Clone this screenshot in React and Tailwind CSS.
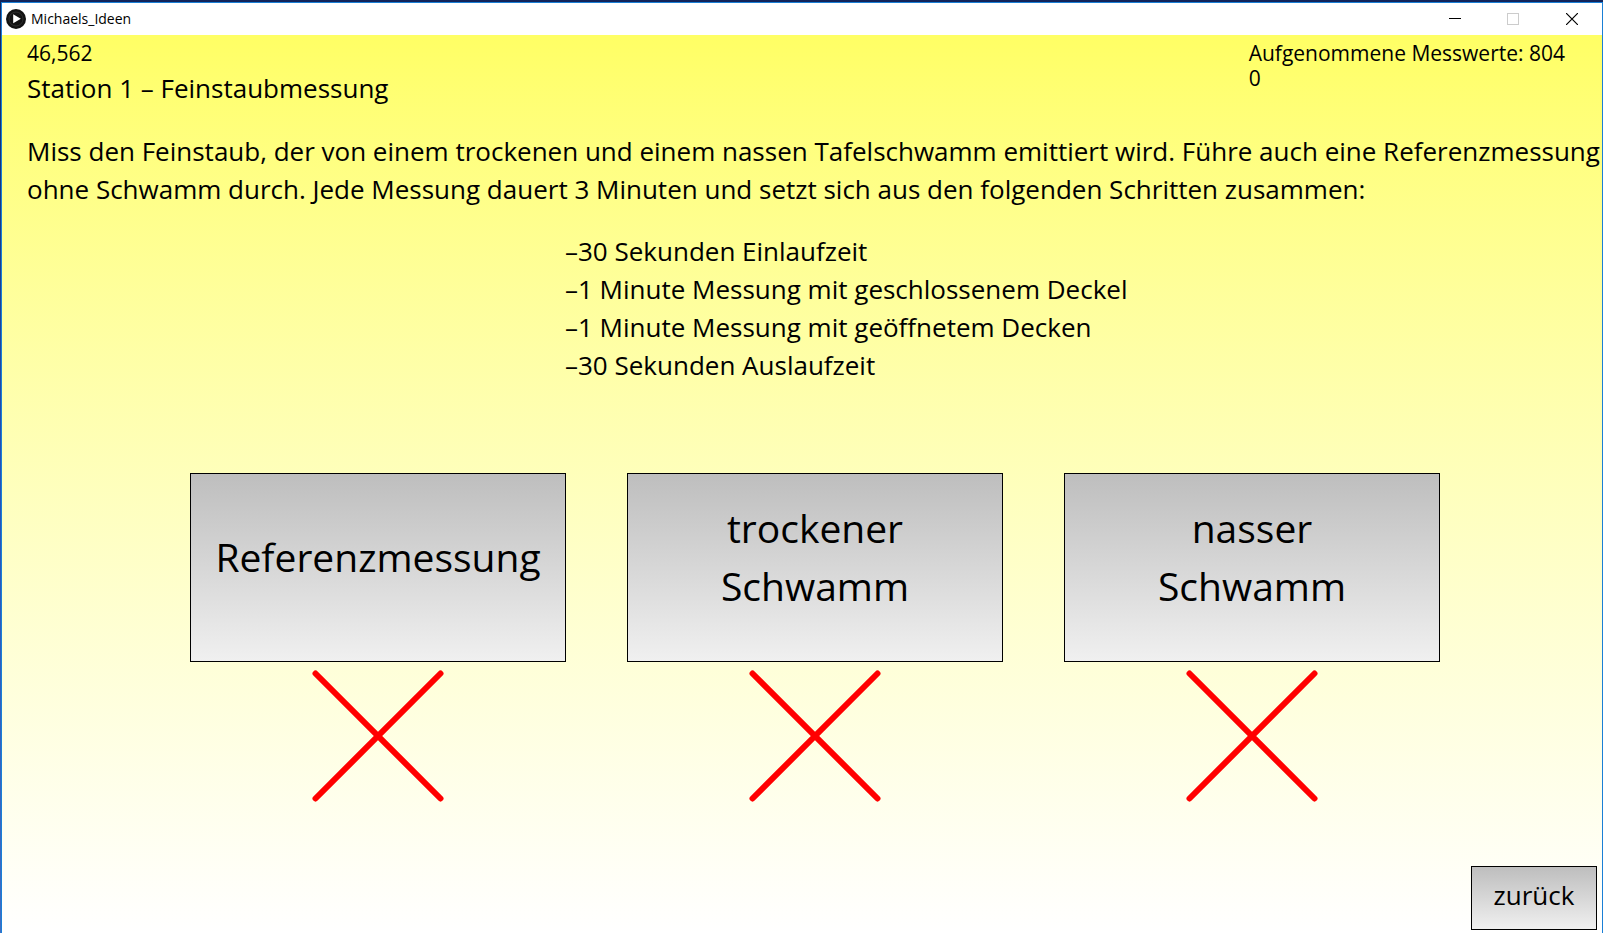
const STATIONS = [
  { id: 'referenz', lines: ['Referenzmessung'] },
  { id: 'trocken', lines: ['trockener', 'Schwamm'] },
  { id: 'nass', lines: ['nasser', 'Schwamm'] },
];

const STEPS = [
  '–30 Sekunden Einlaufzeit',
  '–1 Minute Messung mit geschlossenem Deckel',
  '–1 Minute Messung mit geöffnetem Decken',
  '–30 Sekunden Auslaufzeit',
];

function AppIcon() {
  return (
    <svg width="20" height="20" viewBox="0 0 20 20" aria-hidden="true">
      <circle cx="10" cy="10" r="10" fill="#111" />
      <circle cx="10" cy="10" r="7" fill="none" stroke="#2e2e2e" strokeWidth="1" />
      <path d="M7.2 5.2 L14.8 9.8 L7.2 14.2 Z" fill="#fff" />
    </svg>
  );
}

function TitleBar() {
  return (
    <header className="flex h-8 shrink-0 items-center bg-white pl-1">
      <AppIcon />
      <h1 className="pl-[5px] text-sm">Michaels_Ideen</h1>
      <div className="ml-auto flex self-stretch">
        <button type="button" aria-label="Minimieren" className="flex w-[58px] items-center justify-center">
          <svg width="12" height="12" viewBox="0 0 12 12"><path d="M0 5.5H12" stroke="#000" /></svg>
        </button>
        <button type="button" aria-label="Maximieren" disabled className="flex w-[58px] items-center justify-center">
          <svg width="12" height="12" viewBox="0 0 12 12"><rect x=".5" y=".5" width="11" height="11" fill="none" stroke="#ccc" /></svg>
        </button>
        <button type="button" aria-label="Schließen" className="flex w-[60px] items-center justify-center">
          <svg width="12" height="12" viewBox="0 0 12 12"><path d="M0 0L12 12M12 0L0 12" stroke="#000" strokeWidth="1.2" /></svg>
        </button>
      </div>
    </header>
  );
}

function Station({ lines }) {
  return (
    <div className="flex flex-col items-center gap-2">
      <button
        type="button"
        className="flex h-[189px] w-full flex-col items-center justify-center border border-black bg-linear-to-b from-[#bebebe] to-[#f0f0f0] pb-[22px] text-[39px] leading-[58px]"
      >
        {lines.map((line) => (
          <span key={line}>{line}</span>
        ))}
      </button>
      <svg width="132" height="132" viewBox="0 0 132 132" role="img" aria-label="Noch nicht gemessen">
        <path d="M3.5 3.5L128.5 128.5M128.5 3.5L3.5 128.5" stroke="#f00" strokeWidth="6" strokeLinecap="round" />
      </svg>
    </div>
  );
}

export default function App() {
  return (
    <div className="flex min-h-screen flex-col bg-linear-to-b from-[#12245a] via-[#2450b8] to-[#3f6fc4] pt-0.5 pl-px">
      <div className="flex grow flex-col border-t border-r border-l border-[#1a7fd6] font-['Open_Sans','Noto_Sans',sans-serif] text-black">
        <TitleBar />
        <main className="flex grow flex-col bg-linear-to-b from-[#ffff64] to-white pb-[3px]">
          <div className="flex justify-between pt-1.5 pr-[37px] pl-[25px] text-[21px] leading-[25px]">
            <div>
              <p>46,562</p>
              <h2 className="pt-[3px] text-[26px] leading-[38px]">Station 1 – Feinstaubmessung</h2>
            </div>
            <div>
              <p>Aufgenommene Messwerte: 804</p>
              <p>0</p>
            </div>
          </div>
          <p className="pt-[25px] pl-[25px] text-[26px] leading-[38px] whitespace-nowrap">
            Miss den Feinstaub, der von einem trockenen und einem nassen Tafelschwamm emittiert wird. Führe auch eine Referenzmessung
            <br />
            ohne Schwamm durch. Jede Messung dauert 3 Minuten und setzt sich aus den folgenden Schritten zusammen:
          </p>
          <ul className="pt-6 pl-[563px] text-[26px] leading-[38px]">
            {STEPS.map((step) => (
              <li key={step}>{step}</li>
            ))}
          </ul>
          <div className="grid grid-cols-3 gap-[61px] pt-[89px] pr-[162px] pl-[188px]">
            {STATIONS.map((station) => (
              <Station key={station.id} lines={station.lines} />
            ))}
          </div>
          <button
            type="button"
            className="mt-auto mr-[5px] flex h-16 w-[126px] items-center justify-center self-end border border-black bg-linear-to-b from-[#bebebe] to-[#f0f0f0] pb-1.5 text-[26px]"
          >
            zurück
          </button>
        </main>
      </div>
    </div>
  );
}
